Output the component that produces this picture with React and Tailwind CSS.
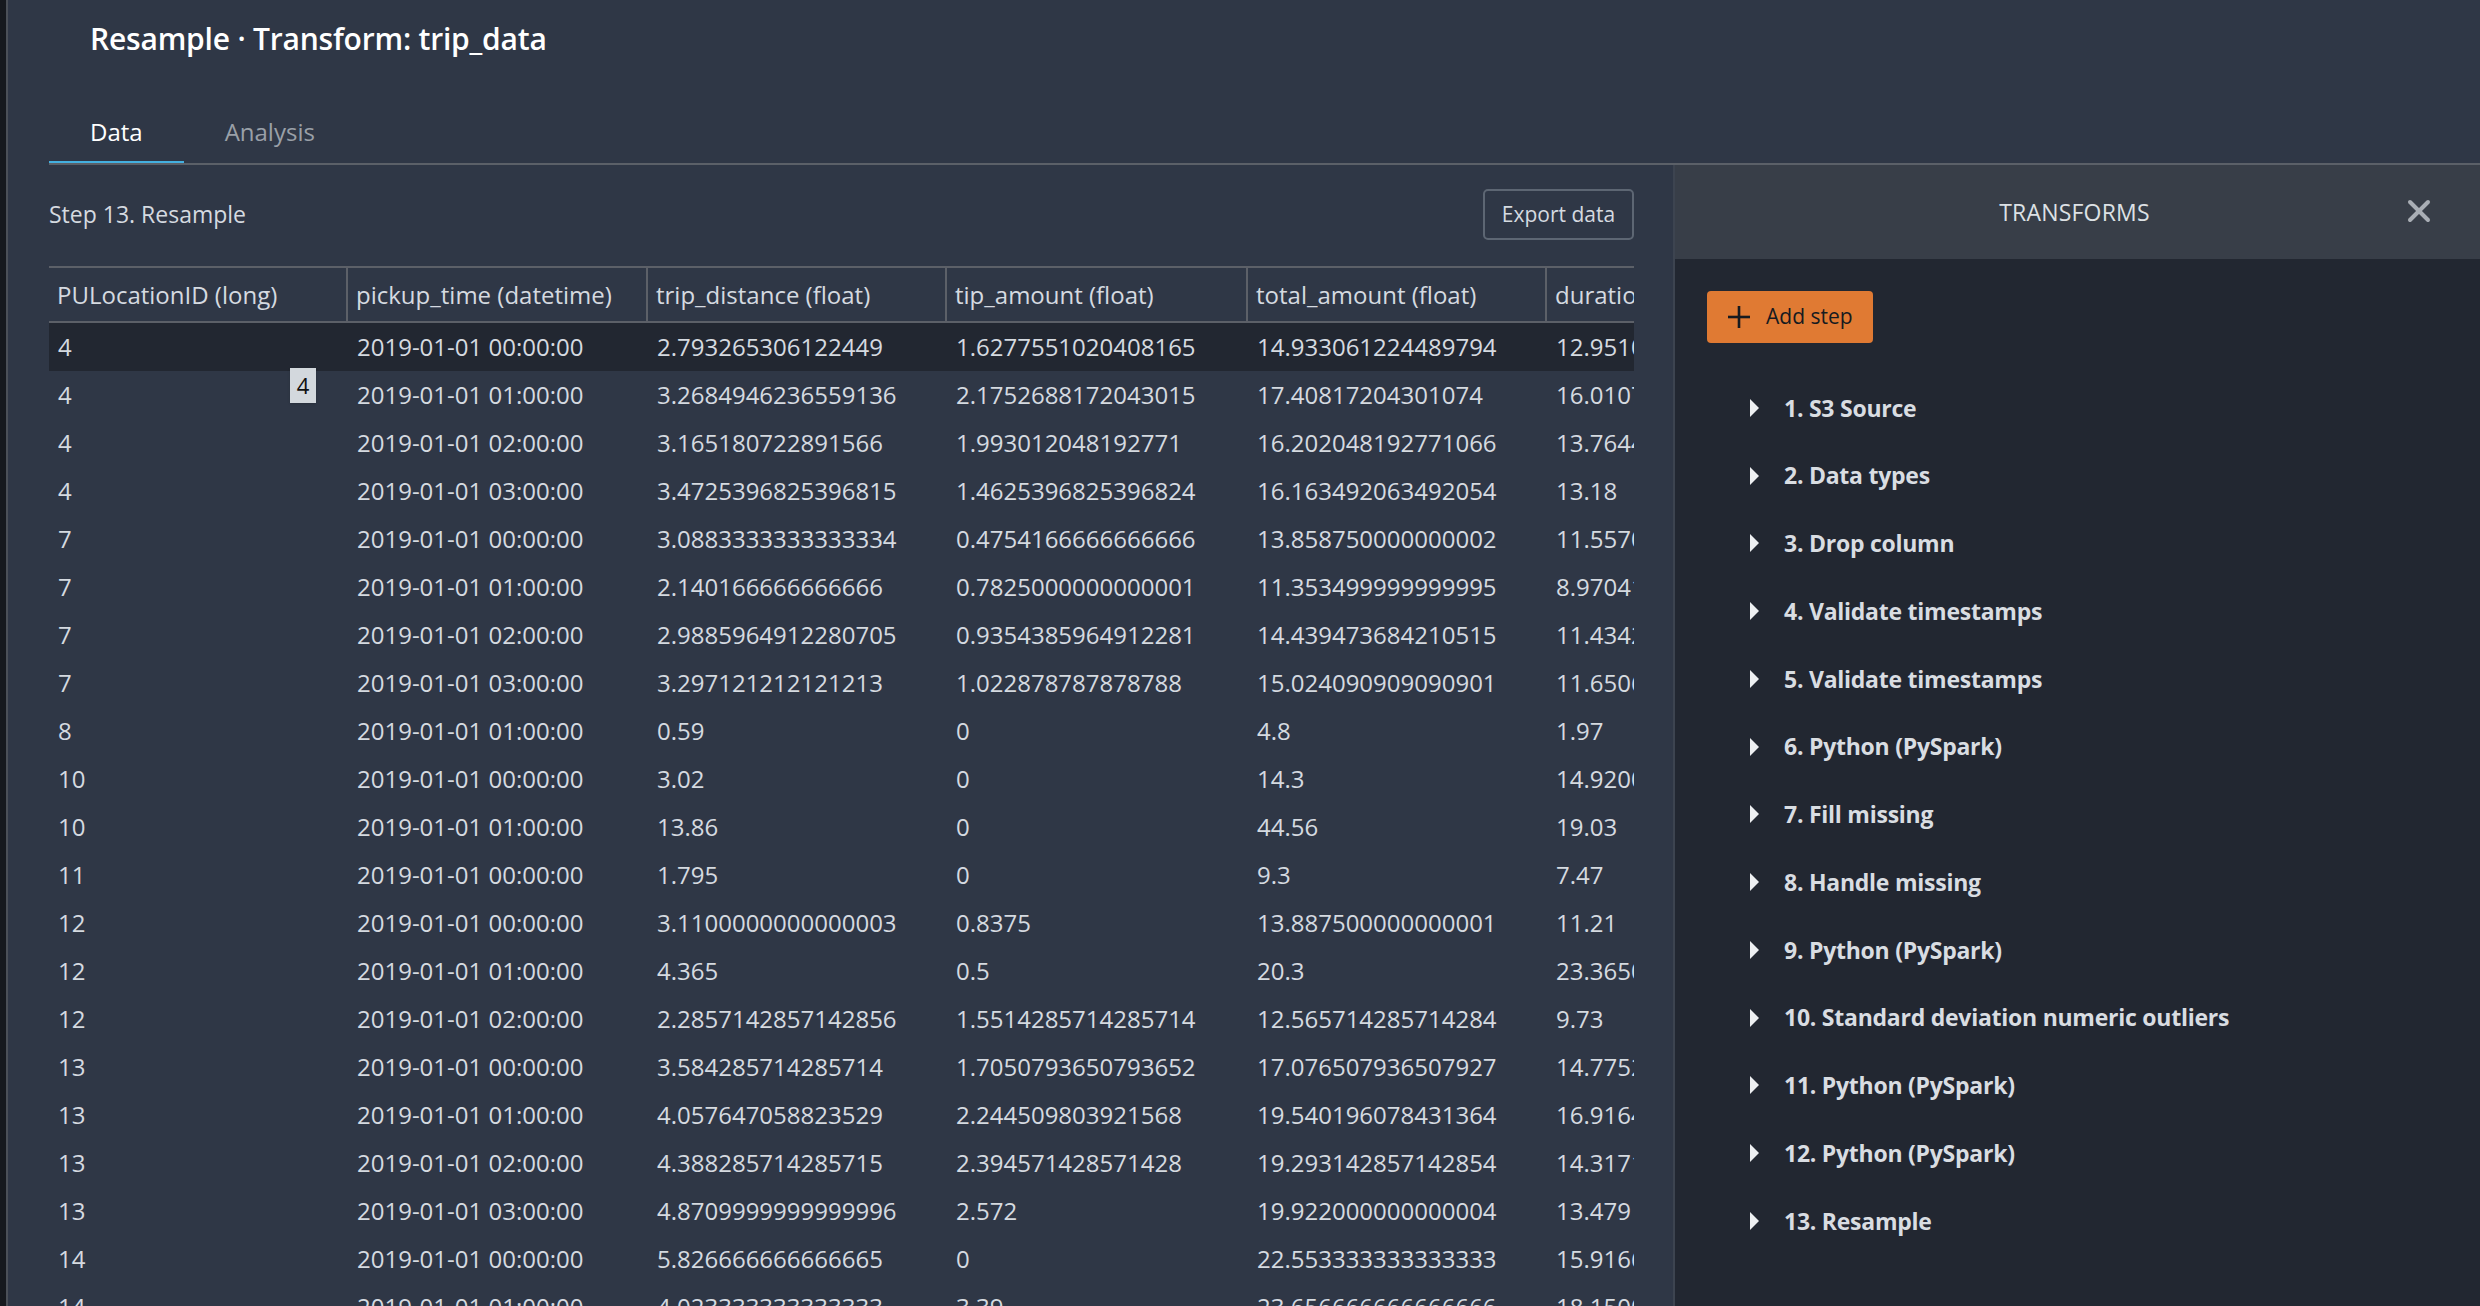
import React from "react";

const columns = [
  { label: "PULocationID (long)", w: "w-[299px]" },
  { label: "pickup_time (datetime)", w: "w-[300px]" },
  { label: "trip_distance (float)", w: "w-[299px]" },
  { label: "tip_amount (float)", w: "w-[301px]" },
  { label: "total_amount (float)", w: "w-[299px]" },
  { label: "duration (float)", w: "w-[300px]" },
];

const rows = [
  ["4", "2019-01-01 00:00:00", "2.793265306122449", "1.6277551020408165", "14.933061224489794", "12.951020408163266"],
  ["4", "2019-01-01 01:00:00", "3.2684946236559136", "2.1752688172043015", "17.40817204301074", "16.010752688172044"],
  ["4", "2019-01-01 02:00:00", "3.165180722891566", "1.993012048192771", "16.202048192771066", "13.764457831325302"],
  ["4", "2019-01-01 03:00:00", "3.4725396825396815", "1.4625396825396824", "16.163492063492054", "13.18"],
  ["7", "2019-01-01 00:00:00", "3.0883333333333334", "0.4754166666666666", "13.858750000000002", "11.557083333333333"],
  ["7", "2019-01-01 01:00:00", "2.140166666666666", "0.7825000000000001", "11.353499999999995", "8.970416666666667"],
  ["7", "2019-01-01 02:00:00", "2.9885964912280705", "0.9354385964912281", "14.439473684210515", "11.434210526315789"],
  ["7", "2019-01-01 03:00:00", "3.297121212121213", "1.022878787878788", "15.024090909090901", "11.650606060606061"],
  ["8", "2019-01-01 01:00:00", "0.59", "0", "4.8", "1.97"],
  ["10", "2019-01-01 00:00:00", "3.02", "0", "14.3", "14.920000000000002"],
  ["10", "2019-01-01 01:00:00", "13.86", "0", "44.56", "19.03"],
  ["11", "2019-01-01 00:00:00", "1.795", "0", "9.3", "7.47"],
  ["12", "2019-01-01 00:00:00", "3.1100000000000003", "0.8375", "13.887500000000001", "11.21"],
  ["12", "2019-01-01 01:00:00", "4.365", "0.5", "20.3", "23.365000000000002"],
  ["12", "2019-01-01 02:00:00", "2.2857142857142856", "1.5514285714285714", "12.565714285714284", "9.73"],
  ["13", "2019-01-01 00:00:00", "3.584285714285714", "1.7050793650793652", "17.076507936507927", "14.775238095238095"],
  ["13", "2019-01-01 01:00:00", "4.057647058823529", "2.244509803921568", "19.540196078431364", "16.916470588235295"],
  ["13", "2019-01-01 02:00:00", "4.388285714285715", "2.394571428571428", "19.293142857142854", "14.317142857142857"],
  ["13", "2019-01-01 03:00:00", "4.8709999999999996", "2.572", "19.922000000000004", "13.479"],
  ["14", "2019-01-01 00:00:00", "5.826666666666665", "0", "22.553333333333333", "15.916666666666666"],
  ["14", "2019-01-01 01:00:00", "4.023333333333333", "3.39", "23.656666666666666", "18.150000000000002"],
];

const steps = [
  "1. S3 Source",
  "2. Data types",
  "3. Drop column",
  "4. Validate timestamps",
  "5. Validate timestamps",
  "6. Python (PySpark)",
  "7. Fill missing",
  "8. Handle missing",
  "9. Python (PySpark)",
  "10. Standard deviation numeric outliers",
  "11. Python (PySpark)",
  "12. Python (PySpark)",
  "13. Resample",
];

const Caret = () => (
  <svg width="11" height="20" viewBox="0 0 11 20" className="shrink-0">
    <polygon points="1,1 10,10 1,19" fill="#eef0f2" />
  </svg>
);

const App = () => {
  return (
    <div className="w-[2480px] h-[1306px] overflow-hidden flex bg-[#2f3746] font-['Open_Sans',sans-serif] text-[#d5dae0]">
      {/* dark window edge */}
      <div className="w-[8px] shrink-0 bg-[#16191e] border-r-2 border-[#4b5058]" />

      <div className="flex-1 flex flex-col min-w-0">
        {/* Title */}
        <div className="h-[76px] shrink-0 flex items-center pl-[82px]">
          <h1 className="text-[30px] font-semibold text-white tracking-[-0.2px]">
            Resample · Transform: trip_data
          </h1>
        </div>

        {/* Tabs */}
        <div className="ml-[41px] flex border-b-2 border-[#5b6068] shrink-0">
          <div className="px-[41px] pt-[43px] pb-[17px] leading-[25px] text-[24px] font-medium text-white border-b-2 border-[#44b0e0]">
            Data
          </div>
          <div className="px-[41px] pt-[43px] pb-[17px] leading-[25px] text-[24px] text-[#9aa0a8] border-b-2 border-transparent">
            Analysis
          </div>
        </div>

        <div className="flex-1 flex min-h-0">
          {/* Data panel */}
          <div className="w-[1665px] shrink-0 pl-[41px] pr-[39px]">
            <div className="flex items-center justify-between pt-[24px] pb-[26px]">
              <span className="text-[23px] text-[#d5dae0]">Step 13. Resample</span>
              <button className="w-[151px] h-[51px] rounded-[5px] border-2 border-[#5d6673] text-[21px] font-medium text-[#d5dae0]">
                Export data
              </button>
            </div>

            <div className="relative w-[1585px] overflow-hidden">
              <div className="flex border-y-2 border-[#5c6068] h-[57px]">
                {columns.map((c, i) => (
                  <div
                    key={c.label}
                    className={`${c.w} shrink-0 flex items-center pl-[8px] text-[24px] whitespace-nowrap overflow-hidden ${i < columns.length - 1 ? "border-r-2 border-[#5c6068]" : ""}`}
                  >
                    {c.label}
                  </div>
                ))}
              </div>

              {rows.map((r, ri) => (
                <div key={ri} className={`flex h-[48px] ${ri === 0 ? "bg-[#222731]" : ""}`}>
                  {r.map((v, ci) => (
                    <div
                      key={ci}
                      className={`${columns[ci].w} shrink-0 flex items-center pl-[9px] text-[24px] whitespace-nowrap overflow-hidden`}
                    >
                      {v}
                    </div>
                  ))}
                </div>
              ))}

              {/* cell tooltip */}
              <div className="absolute left-[241px] top-[102px] w-[26px] h-[35px] bg-[#d3d8dd] text-[#111] text-[22px] flex items-center justify-center shadow">
                4
              </div>
            </div>
          </div>

          {/* Transforms panel */}
          <div className="flex-1 border-l-2 border-[#3d4450] flex flex-col bg-[#222731]">
            <div className="relative h-[94px] shrink-0 bg-[#383e48] flex items-center justify-center">
              <span className="text-[23px] text-[#dde1e5] tracking-[0.2px] -ml-[6px]">TRANSFORMS</span>
              <svg
                className="absolute right-[49px] top-[34px]"
                width="24"
                height="24"
                viewBox="0 0 24 24"
                fill="none"
                stroke="#a9aeb5"
                strokeWidth="4"
                strokeLinecap="round"
              >
                <line x1="3" y1="3" x2="21" y2="21" />
                <line x1="21" y1="3" x2="3" y2="21" />
              </svg>
            </div>

            <div className="pl-[32px] pt-[32px]">
              <button className="w-[166px] h-[52px] rounded-[4px] bg-[#e07a33] flex items-center pl-[20px] gap-[15px] text-[#161a20] text-[21px] font-medium">
                <svg width="24" height="24" viewBox="0 0 24 24" fill="none" stroke="#161a20" strokeWidth="2.6">
                  <line x1="12" y1="1" x2="12" y2="23" />
                  <line x1="1" y1="12" x2="23" y2="12" />
                </svg>
                Add step
              </button>

              <ul className="mt-[31px] pl-[42px]">
                {steps.map((s) => (
                  <li key={s} className="h-[67.75px] flex items-center gap-[24px]">
                    <Caret />
                    <span className="text-[23px] font-bold text-[#d9dde2] tracking-[-0.25px]">{s}</span>
                  </li>
                ))}
              </ul>
            </div>
          </div>
        </div>
      </div>
    </div>
  );
};

export default App;
